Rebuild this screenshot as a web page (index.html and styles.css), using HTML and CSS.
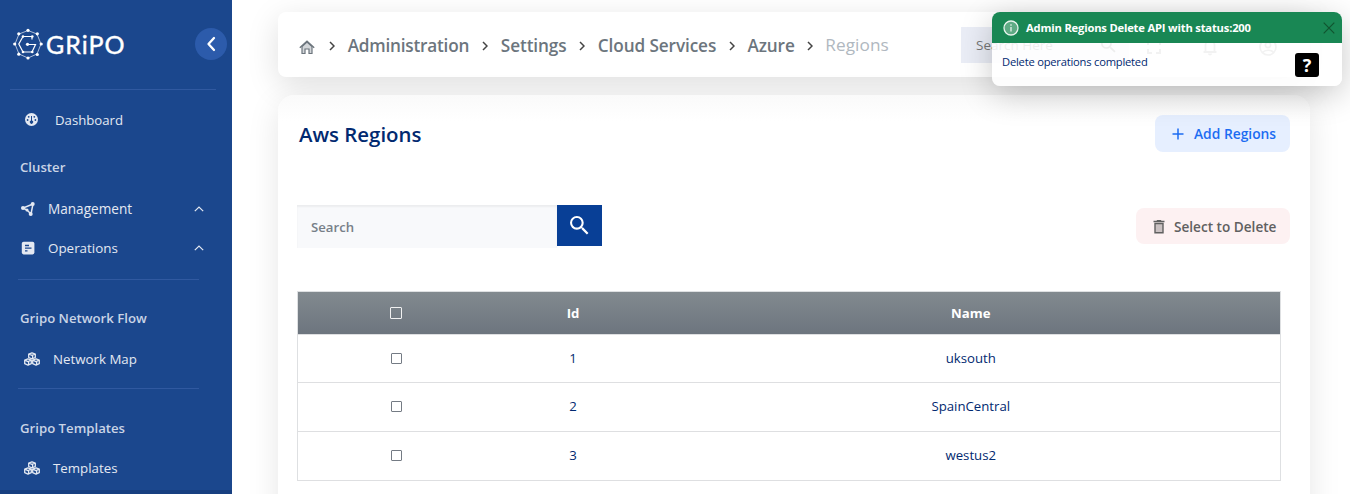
FILE: index.html
```html
<!DOCTYPE html>
<html lang="en">
<head>
<meta charset="utf-8">
<title>Gripo - Regions</title>
<link rel="stylesheet" href="styles.css">
</head>
<body>
<svg class="sprite" width="0" height="0">
  <symbol id="up" viewBox="0 0 10 6"><path d="M.8 5.200 5 1l4.200 4.200" fill="none" stroke="currentColor" stroke-width="1.200"/></symbol>
  <symbol id="right" viewBox="0 0 6 10"><path d="m1 1 4 4-4 4" fill="none" stroke="currentColor" stroke-width="1.500"/></symbol>
  <symbol id="cubes" viewBox="0 0 16 14"><g fill="none" stroke="currentColor" stroke-width="1.300" stroke-linejoin="round"><path d="M8 .8 11.300 2v3.500L8 6.900 4.700 5.500V2zM4.700 2 8 3.400 11.300 2M8.600 3.400v3.400"/><path d="m4 6.900 3.300 1.300v3.500L4 13.200.7 11.700V8.200zM.7 8.200 4 9.600l3.300-1.400M4.600 9.600v3.500M12 6.900l3.300 1.300v3.500L12 13.200l-3.300-1.500V8.200zM8.700 8.200 12 9.600l3.300-1.400M12.600 9.600v3.500"/></g></symbol>
  <symbol id="search" viewBox="3 3 18 18"><path fill="currentColor" d="M15.500 14h-.79l-.28-.27A6.470 6.470 0 0 0 16 9.500 6.500 6.500 0 1 0 9.500 16c1.610 0 3.090-.59 4.230-1.570l.27.28v.79l5 4.990L20.490 19zm-6 0C7.010 14 5 11.990 5 9.500S7.010 5 9.500 5 14 7.010 14 9.500 11.990 14 9.500 14"/></symbol>
</svg>
<div class="app">
  <aside class="sidebar">
    <div class="brand">
      <svg class="logo" viewBox="0 0 32 34"><g fill="none" stroke="#fff"><path d="m16 3.500 9 3.500 4 10-4 10-9 4-9-4-4-10 4-10z" stroke-width=".8" stroke-opacity=".8"/><path d="M20 12.500V9.500h-9L6.800 17l4.200 8h9l3.500-7.500H16" stroke-width="1.200"/></g><g fill="#fff"><circle cx="16" cy="3.300" r="1.600"/><circle cx="25.300" cy="6.800" r="1.600"/><circle cx="29.200" cy="17" r="1.600"/><circle cx="25.300" cy="27.500" r="1.600"/><circle cx="16" cy="31" r="1.600"/><circle cx="6.800" cy="27.200" r="1.600"/><circle cx="2.700" cy="17" r="1.600"/><circle cx="6.800" cy="6.800" r="1.600"/><circle cx="20.300" cy="9.500" r="1.300"/><circle cx="11" cy="9.500" r="1.300"/><circle cx="11" cy="25" r="1.300"/><circle cx="20.300" cy="25" r="1.300"/><circle cx="15.500" cy="17.300" r="1.600"/></g></svg>
      <span class="wordmark">GRiPO</span>
      <span class="collapse"><svg width="10" height="16" viewBox="0 0 10 16"><path d="M8 2 2.500 8 8 14" fill="none" stroke="currentColor" stroke-width="2.300" stroke-linecap="round" stroke-linejoin="round"/></svg></span>
    </div>
    <a class="item item-dash"><svg width="13" height="13" viewBox="0 0 13 13"><circle cx="6.500" cy="6.500" r="6.500" fill="currentColor"/><g fill="#1b478d"><path d="M6 3h1v4.600a1.600 1.600 0 1 1-1 0z"/><circle cx="2.600" cy="7" r=".9"/><circle cx="3.700" cy="3.800" r=".9"/><circle cx="9.300" cy="3.800" r=".9"/><circle cx="10.400" cy="7" r=".9"/></g></svg><span>Dashboard</span></a>
    <h2 class="group group-cluster">Cluster</h2>
    <a class="item item-wide"><svg width="14" height="14" viewBox="0 0 14 14"><path d="M12 2 2 6l4 2 4 4z" fill="none" stroke="currentColor" stroke-width="1.500"/><g fill="currentColor"><circle cx="11.700" cy="2" r="2"/><circle cx="2" cy="6" r="2"/><circle cx="9.700" cy="12" r="2"/><circle cx="6" cy="8" r="1.500"/></g></svg><span>Management</span><svg class="caret" width="10" height="6"><use href="#up"/></svg></a>
    <a class="item item-wide"><svg width="14" height="14" viewBox="0 0 14 14"><rect x=".8" y=".8" width="12.600" height="12.600" rx="1.800" fill="currentColor"/><path d="M4 4.500h4M4 7.200h6.500M4 9.900h2.500" stroke="#1b478d" stroke-width="1.300"/></svg><span class="ops">Operations</span><svg class="caret" width="10" height="6"><use href="#up"/></svg></a>
    <h2 class="group group-ruled group-first">Gripo Network Flow</h2>
    <a class="item item-cubes"><svg width="16" height="14"><use href="#cubes"/></svg><span>Network Map</span></a>
    <h2 class="group group-ruled group-last">Gripo Templates</h2>
    <a class="item item-cubes"><svg width="16" height="14"><use href="#cubes"/></svg><span>Templates</span></a>
  </aside>
  <main class="main">
    <header class="topbar">
      <nav class="crumbs">
        <svg class="home" width="16" height="15" viewBox="0 0 16 15"><path d="M3 6.500 8 2l5 4.500v7h-3V9H6v4.500H3z" fill="#d3d6d9" stroke="#6c757d" stroke-width="1.200"/><path d="M.8 7.700 8 1.300l7.200 6.400" fill="none" stroke="#6c757d" stroke-width="1.400"/></svg>
        <svg class="sep" width="6" height="10"><use href="#right"/></svg>
        <a class="wide">Administration</a><svg class="sep" width="6" height="10"><use href="#right"/></svg>
        <a>Settings</a><svg class="sep" width="6" height="10"><use href="#right"/></svg>
        <a>Cloud Services</a><svg class="sep" width="6" height="10"><use href="#right"/></svg>
        <a>Azure</a><svg class="sep" width="6" height="10"><use href="#right"/></svg>
        <span class="current">Regions</span>
      </nav>
      <div class="quick"><span>Search Here</span><svg width="15" height="15"><use href="#search"/></svg></div>
      <div class="tools">
        <svg width="14" height="14" viewBox="0 0 14 14"><path d="M1 5V1h4M9 1h4v4M13 9v4H9M5 13H1V9" fill="none" stroke="currentColor" stroke-width="2"/></svg>
        <svg width="16" height="18" viewBox="0 0 16 18"><path d="M1.500 14h13M3.500 14V7a4.500 4.500 0 0 1 9 0v7M8 1v2" fill="none" stroke="currentColor" stroke-width="1.800"/><path d="M6 15.500h4a2 2 0 0 1-4 0" fill="currentColor"/></svg>
        <svg width="18" height="18" viewBox="0 0 18 18"><g fill="none" stroke="currentColor" stroke-width="1.700"><circle cx="9" cy="9" r="8"/><circle cx="9" cy="7" r="2.600"/><path d="M3.500 14.500c2.500-3 8.500-3 11 0"/></g></svg>
      </div>
    </header>
    <section class="card">
      <div class="card-head"><h1>Aws Regions</h1><button class="btn add"><svg width="12" height="12" viewBox="0 0 12 12"><path d="M6 .5v11M.5 6h11" stroke="currentColor" stroke-width="1.500"/></svg><span>Add Regions</span></button></div>
      <div class="filters">
        <div class="searchbox"><div class="field">Search</div><button class="go"><svg width="19" height="19"><use href="#search"/></svg></button></div>
        <button class="btn del"><svg width="12" height="14" viewBox="0 0 12 14"><path d="M2 3.500h8v9.300H2z" fill="#c9c0c1" stroke="currentColor" stroke-width="1.400"/><path d="M.5 1.500h11M3.800.7h4.400" stroke="currentColor" stroke-width="1.300"/></svg><span>Select to Delete</span></button>
      </div>
      <table class="grid">
        <colgroup><col class="col-check"><col class="col-id"><col></colgroup>
        <thead><tr><th><i class="box"></i></th><th>Id</th><th>Name</th></tr></thead>
        <tbody>
          <tr><td><i class="box"></i></td><td>1</td><td>uksouth</td></tr>
          <tr><td><i class="box"></i></td><td>2</td><td>SpainCentral</td></tr>
          <tr><td><i class="box"></i></td><td>3</td><td>westus2</td></tr>
        </tbody>
      </table>
    </section>
  </main>
</div>
<div class="toast">
  <div class="toast-head"><svg width="16" height="16" viewBox="0 0 16 16"><circle cx="8" cy="8" r="7" fill="#5fab85" stroke="#e8f3ed" stroke-width="1.300"/><path d="M8 7v4.500M8 4.300v1.500" stroke="#e8f3ed" stroke-width="1.300"/></svg><strong>Admin Regions Delete API with status:200</strong><svg width="12" height="12" viewBox="0 0 12 12"><path d="m.7.7 10.600 10.600m0-10.600L.7 11.300" stroke="#11542f" stroke-width="1.200"/></svg></div>
  <div class="toast-body">Delete operations completed</div>
</div>
<div class="help">?</div>
</body>
</html>
```
FILE: styles.css
```css
* { box-sizing: border-box; }
body { margin: 0; height: 494px; overflow: hidden; background: #fff; font-family: "Open Sans", "Noto Sans", sans-serif; font-size: 13.2px; color: #012970; }
svg { display: block; flex: none; }
.sprite { position: absolute; }
h1, h2 { margin: 0; font-weight: 600; }
button { border: 0; font: inherit; padding: 0; }
.app { display: flex; height: 494px; overflow: hidden; }

.sidebar { width: 232px; flex: none; background: #1b478d; color: #e4e9f2; border-bottom: 4px solid #183f80; }
.brand { display: flex; align-items: center; height: 90px; margin: 0 5px 0 10px; padding-left: 2px; background: linear-gradient(#3059a0, #3059a0) 0 100% / 206px 1px no-repeat; }
.logo { width: 32px; height: 34px; margin-top: -2px; }
.wordmark { margin-left: 2px; margin-top: -3px; font: 400 25px/30px Lato, sans-serif; color: #fff; letter-spacing: 1px; width: 84px; white-space: nowrap; -webkit-text-stroke: .4px #fff; }
.collapse { display: flex; flex: none; align-items: center; justify-content: center; width: 32px; height: 32px; margin-left: auto; margin-top: -2px; border-radius: 50%; background: #2c5bab; color: #fff; }
.item { display: flex; align-items: center; height: 39px; }
.item-dash { height: 60px; padding-left: 25px; gap: 17px; }
.item-dash svg { margin-top: -2px; }
.group { padding-left: 20px; height: 34px; line-height: 34px; font-size: 13.2px; color: #c9d4e6; }
.group-cluster { margin-bottom: 5px; }
.item-wide { width: 204px; padding-left: 21px; gap: 13px; font-size: 13.6px; }
.item-wide .ops { font-size: 13.400px; }
.caret { margin-left: auto; }
.item-cubes { padding-left: 24px; gap: 13px; height: 42px; font-size: 13.3px; }
.group-ruled { height: 59px; }
.group-ruled::before { content: ""; display: block; width: 181px; margin-left: -2px; margin-bottom: 22px; border-top: 1px solid #3059a0; }
.group-first { margin-top: 12px; }
.group-first::before { margin-bottom: 21px; }
.group-last { margin-top: 8px; }

.main { width: 1032px; flex: none; margin-left: 46px; padding-top: 12px; }
.topbar { display: flex; align-items: center; height: 65px; border-radius: 8px; background: #fff; box-shadow: 0 8px 32px rgba(0,0,0,.13); padding: 0 32px 0 21px; }
.crumbs { display: flex; align-items: center; margin-top: 2px; font-size: 17.2px; font-weight: 600; letter-spacing: -.1px; color: #6c757d; white-space: nowrap; }
.home { margin-right: 14px; margin-top: 3px; }
.sep { color: #444; }
.crumbs a { display: block; margin: 0 12.5px 0 12.7px; }
.crumbs .wide { letter-spacing: -.22px; margin-right: 13px; }
.crumbs .current { font-weight: 400; color: #b0b8c0; margin-left: 12px; margin-top: -2px; letter-spacing: .1px; }
.quick { display: flex; align-items: center; justify-content: space-between; width: 168px; height: 36px; margin-left: auto; padding: 1px 13px 0 15px; background: #eaedf6; color: #777; font-size: 13.500px; }
.tools { display: flex; align-items: center; gap: 41px; margin-left: 18px; padding-right: 1px; padding-top: 4px; color: #999; }

.card { margin-top: 18px; height: 450px; border-radius: 16px; padding: 20px 20px 0 19px; background: linear-gradient(#fafafa, #fff 26px); box-shadow: 0 8px 32px rgba(0,0,0,.1); }
.card-head { display: flex; justify-content: space-between; height: 37px; align-items: center; }
.card-head h1 { margin-left: 2px; margin-top: 1px; font-size: 20.4px; line-height: 28px; }
.btn { display: flex; align-items: center; border-radius: 8px; font-weight: 600; white-space: nowrap; }
.add { width: 135px; height: 37px; padding-left: 17px; gap: 10px; background: #e6efff; color: #1b6cf2; font-size: 13.800px; }
.filters { display: flex; justify-content: space-between; align-items: flex-start; margin-top: 53px; height: 43px; }
.searchbox { display: flex; }
.field { width: 260px; height: 43px; padding: 0 14px; line-height: 44px; font-weight: 600; color: #777f88; background: #f8f9fb; box-shadow: inset 0 2px 2px rgba(0,0,0,.05); }
.go { width: 45px; height: 41px; display: flex; align-items: center; justify-content: center; background: #083f96; color: #fff; }
.del { width: 154px; height: 36px; margin-top: 3px; padding: 1px 0 0 17px; gap: 9px; background: #fdf1f2; color: #606060; font-size: 13.600px; }

.grid { width: 984px; margin-top: 43px; border-collapse: collapse; table-layout: fixed; border: 1px solid #dee0e2; text-align: center; }
.col-check { width: 197px; }
.col-id { width: 157px; }
.grid td, .grid th { padding: 0; height: 49px; border-bottom: 1px solid #dedfe1; }
.grid td { padding-bottom: 2px; }
.grid tbody tr:first-child td { height: 48px; }
.grid td:last-child, .grid th:last-child { padding-left: 10px; }
.grid thead { background: linear-gradient(#828a8f, #6c747e); color: #fff; }
.grid th { height: 43px; font-weight: 700; }
.box { display: inline-block; width: 11px; height: 11px; border: 1px solid #747b84; border-radius: 1px; vertical-align: -1px; }
th .box { width: 12px; height: 12px; border-color: #f1f1f1; vertical-align: -1px; }

.toast { position: absolute; left: 992px; top: 12px; width: 350px; height: 74px; border-radius: 8px; overflow: hidden; background: rgba(255,255,255,.87); box-shadow: 0 8px 32px rgba(0,0,0,.22); font-size: 11.2px; }
.toast-head { display: flex; align-items: center; height: 31px; padding: 0 7px 0 11px; background: #198754; color: #fff; }
.toast-head strong { flex: 1; margin-left: 7px; font-weight: 700; letter-spacing: -.18px; }
.toast-body { padding: 10px; line-height: 18px; letter-spacing: -.22px; }
.help { position: absolute; left: 1295px; top: 53px; width: 24px; height: 24px; border-radius: 3px; background: #000; color: #fff; font-size: 18px; font-weight: 700; line-height: 24px; text-align: center; }
```
